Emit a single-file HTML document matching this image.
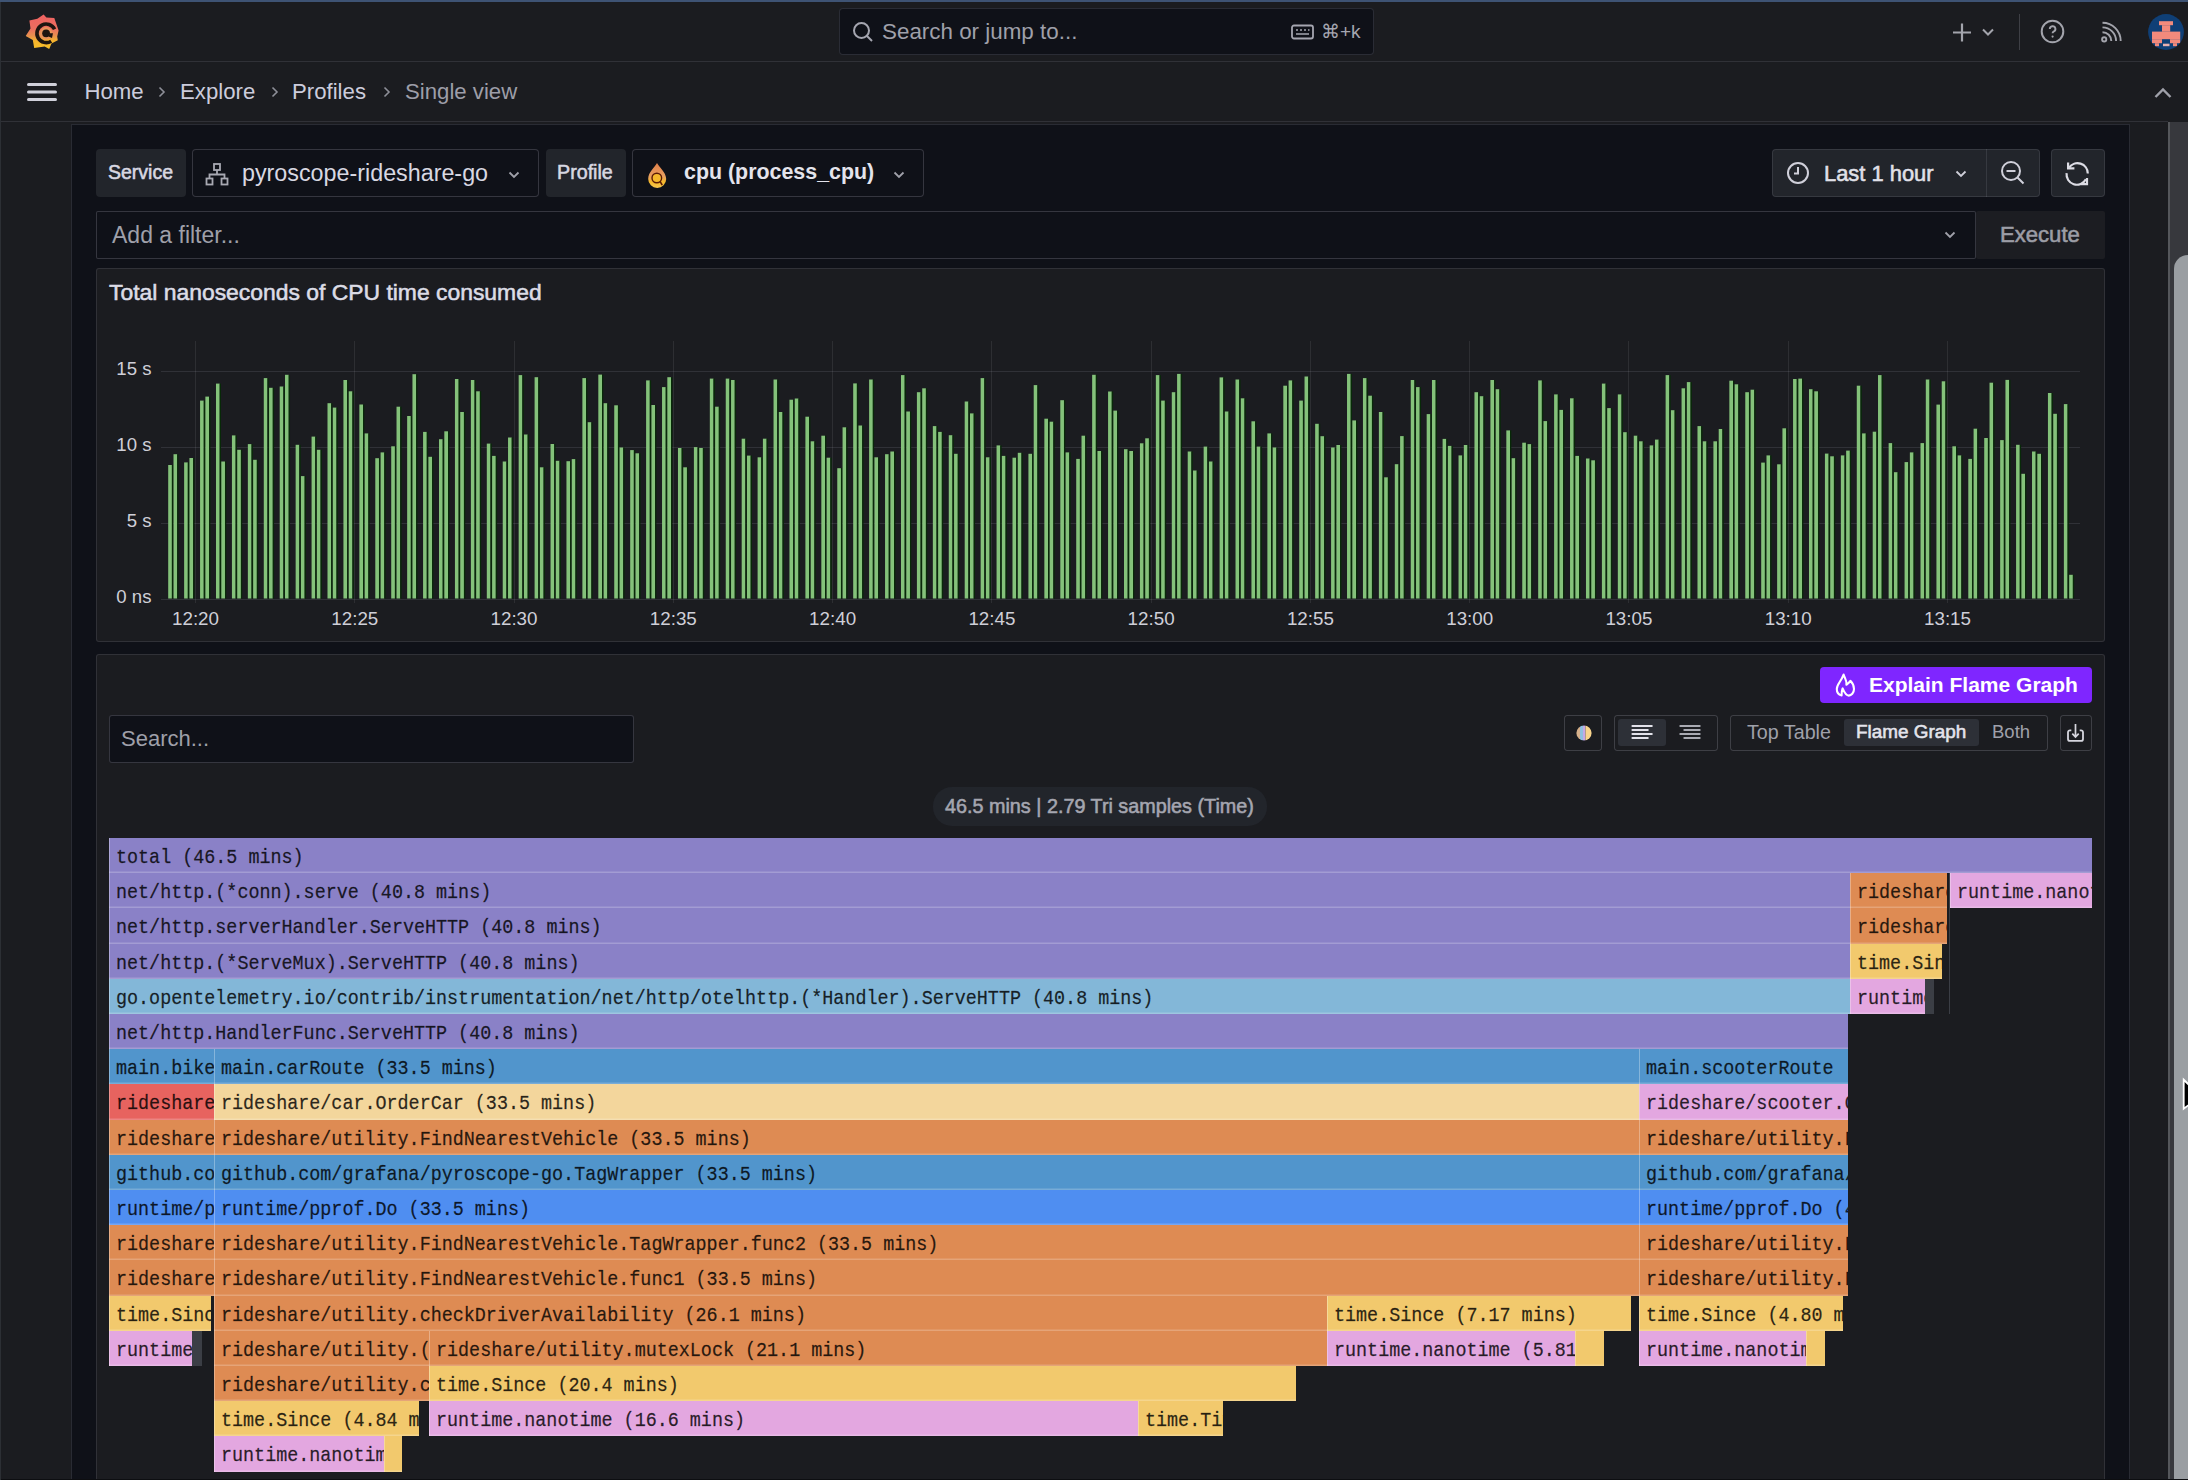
<!DOCTYPE html>
<html><head><meta charset='utf-8'><style>
*{box-sizing:border-box;margin:0;padding:0}
html,body{width:2188px;height:1480px;overflow:hidden;background:#1b1c20;font-family:"Liberation Sans",sans-serif;color:#ccccdc}
.a{position:absolute}
.t{position:absolute;white-space:nowrap;line-height:1}
.ft{display:inline-block;transform:scaleY(1.09);transform-origin:0 24px}
.fb{position:absolute;overflow:hidden;white-space:nowrap;font-family:"Liberation Mono",monospace;font-size:18.4px;color:rgba(0,0,0,0.82);-webkit-text-stroke:0.35px rgba(0,0,0,0.5);line-height:34px;padding-left:7px;padding-top:4px;box-shadow:inset 1px 0 0 rgba(255,255,255,0.3),inset 0 -1.4px 0 rgba(255,255,255,0.22)}
</style></head><body>
<div class='a' style='left:0;top:0;width:2188px;height:2px;background:#3e5374'></div>
<div class='a' style='left:0;top:61px;width:2188px;height:1px;background:rgba(204,204,220,0.12)'></div>
<div class='a' style='left:0;top:121px;width:2168px;height:1px;background:rgba(204,204,220,0.12)'></div>
<svg class='a' style='left:22px;top:11px' width='42' height='42' viewBox='0 0 42 42'>
<defs><linearGradient id='lg' x1='0' y1='0' x2='0' y2='1'><stop offset='0' stop-color='#f06262'/><stop offset='0.42' stop-color='#ec6f5f'/><stop offset='0.62' stop-color='#e8914e'/><stop offset='0.78' stop-color='#f6b52c'/><stop offset='1' stop-color='#f8c02a'/></linearGradient></defs>
<path fill='url(#lg)' d='M21.6 3.4 L24.4 6.5 L32.3 7.1 L34 11.9 L36.6 19.6 L35.2 25.5 L35.8 29.2 L29.5 32.6 L27.2 38 L22.7 35.5 L12.2 36.9 L10.8 28.9 L3.7 25 L8.5 17.6 L7.4 9.4 L15.3 7.7 Z'/>
<path d='M32.6 18.3 A9.3 9.3 0 1 0 29.2 30.2' fill='none' stroke='#1e1510' stroke-width='3.6'/>
<circle cx='24.1' cy='22.3' r='6.2' fill='#e8925a'/>
<circle cx='24.1' cy='22.3' r='3.9' fill='#1e1510'/>
<path d='M28 22.3 L31 22.3 L30 27 L26.5 25.6 Z' fill='#1e1510'/>
</svg>
<div class='a' style='left:839px;top:8px;width:535px;height:47px;background:#0f1118;border:1px solid rgba(204,204,220,0.15);border-radius:4px'></div>
<svg class='a' style='left:852px;top:21px' width='22' height='22' viewBox='0 0 22 22'><circle cx='9.5' cy='9.5' r='7.5' fill='none' stroke='#a5a6b0' stroke-width='2'/><path d='M15 15 L20 20' stroke='#a5a6b0' stroke-width='2'/></svg>
<div class='t' style='left:882px;top:21px;font-size:22.4px;color:#9fa0aa'>Search or jump to...</div>
<svg class='a' style='left:1291px;top:24px' width='23' height='16' viewBox='0 0 23 16'><rect x='1' y='1.5' width='21' height='13' rx='2' fill='none' stroke='#a5a6b0' stroke-width='1.8'/><path d='M5 6h2M9 6h2M13 6h2M17 6h1.5M5 10h13' stroke='#a5a6b0' stroke-width='1.6'/></svg>
<div class='t' style='left:1321px;top:22px;font-size:19px;color:#a5a6b0'>⌘+k</div>
<svg class='a' style='left:1951px;top:21px' width='22' height='22' viewBox='0 0 22 22'><path d='M11 2.5v18M2 11.5h18' stroke='#a3a4ac' stroke-width='2.2'/></svg>
<svg class='a' style='left:1981px;top:27px' width='14' height='10' viewBox='0 0 14 10'><path d='M2 2.5l5 5 5-5' fill='none' stroke='#a3a4ac' stroke-width='2'/></svg>
<div class='a' style='left:2019px;top:14px;width:1px;height:36px;background:rgba(204,204,220,0.2)'></div>
<svg class='a' style='left:2039px;top:18px' width='27' height='27' viewBox='0 0 27 27'><circle cx='13.5' cy='13.5' r='10.8' fill='none' stroke='#a3a4ac' stroke-width='2'/><path d='M10.8 11a2.8 2.8 0 1 1 3.8 2.6c-0.8 0.4-1 0.9-1 1.7' fill='none' stroke='#a3a4ac' stroke-width='1.9'/><circle cx='13.6' cy='18.6' r='1.1' fill='#a3a4ac'/></svg>
<svg class='a' style='left:2099px;top:21px' width='24' height='24' viewBox='0 0 24 24'><circle cx='5.2' cy='18.4' r='2.1' fill='none' stroke='#a3a4ac' stroke-width='1.9'/><path d='M3.5 11.2a8.8 8.8 0 0 1 8.8 8.8M3.5 6.4a13.6 13.6 0 0 1 13.6 13.6M3.5 1.8a18.2 18.2 0 0 1 18.2 18.2' fill='none' stroke='#a3a4ac' stroke-width='1.9'/></svg>
<svg class='a' style='left:2148px;top:13.8px' width='36' height='36' viewBox='2148 13.8 36 36'><clipPath id='av'><circle cx='2166' cy='31.8' r='17.9'/></clipPath><g clip-path='url(#av)'><rect x='2148' y='13.8' width='36' height='36' fill='#0f3f76'/>
<g fill='#f28a7c'><rect x='2159' y='21' width='14' height='4'/><rect x='2162' y='25' width='8.2' height='6.5'/><rect x='2152' y='31.4' width='28.2' height='7.6'/><rect x='2152' y='39' width='10' height='4'/><rect x='2155' y='43' width='4' height='3'/><rect x='2170' y='39' width='10.2' height='4'/><rect x='2173' y='43' width='4' height='3'/><rect x='2163' y='43.5' width='6.5' height='2.5' fill='#e8b0b0'/></g></g></svg>
<svg class='a' style='left:2153px;top:86px' width='20' height='14' viewBox='0 0 20 14'><path d='M2.5 11l7.5-7.5 7.5 7.5' fill='none' stroke='#a0a1aa' stroke-width='2.4'/></svg>
<svg class='a' style='left:27px;top:82px' width='30' height='20' viewBox='0 0 30 20'><path d='M1.5 2.5h27M1.5 10h27M1.5 17.5h27' stroke='#d0d0da' stroke-width='3' stroke-linecap='round'/></svg>
<div class='t' style='left:84.5px;top:81px;font-size:22.2px;color:#ccccdc'>Home</div>
<div class='t' style='left:180px;top:81px;font-size:22.2px;color:#ccccdc'>Explore</div>
<div class='t' style='left:292px;top:81px;font-size:22.2px;color:#ccccdc'>Profiles</div>
<div class='t' style='left:405px;top:81px;font-size:22.2px;color:#9d9ea8'>Single view</div>
<svg class='a' style='left:157px;top:85px' width='10' height='14' viewBox='0 0 10 14'><path d='M2.5 2.5l4.5 4.5-4.5 4.5' fill='none' stroke='#8e8f98' stroke-width='1.6'/></svg>
<svg class='a' style='left:270px;top:85px' width='10' height='14' viewBox='0 0 10 14'><path d='M2.5 2.5l4.5 4.5-4.5 4.5' fill='none' stroke='#8e8f98' stroke-width='1.6'/></svg>
<svg class='a' style='left:382px;top:85px' width='10' height='14' viewBox='0 0 10 14'><path d='M2.5 2.5l4.5 4.5-4.5 4.5' fill='none' stroke='#8e8f98' stroke-width='1.6'/></svg>
<div class='a' style='left:71px;top:124px;width:2059px;height:1400px;background:#0f1118;border:1px solid rgba(204,204,220,0.14)'></div>
<div class='a' style='left:2168px;top:122px;width:20px;height:1358px;background:#37383d;border-left:2px solid #55575b'></div>
<div class='a' style='left:2174px;top:255px;width:28px;height:1260px;background:#9a9ea2;border-radius:14px'></div>
<div class='a' style='left:96px;top:149px;width:90px;height:48px;background:#22252b;border-radius:4px'></div>
<div class='t' style='left:108px;top:163.2px;-webkit-text-stroke:0.55px currentColor;font-size:19.5px;color:#d8d8e2'>Service</div>
<div class='a' style='left:192px;top:149px;width:347px;height:48px;background:#0f1118;border:1px solid rgba(204,204,220,0.2);border-radius:4px'></div>
<svg class='a' style='left:205px;top:163px' width='24' height='24' viewBox='0 0 24 24'><rect x='9' y='1' width='6' height='6' fill='none' stroke='#a8a9b2' stroke-width='1.8'/><rect x='1.5' y='15.5' width='6' height='6' fill='none' stroke='#a8a9b2' stroke-width='1.8'/><rect x='16.5' y='15.5' width='6' height='6' fill='none' stroke='#a8a9b2' stroke-width='1.8'/><path d='M12 7v4.5M4.5 15.5v-4h15v4' fill='none' stroke='#a8a9b2' stroke-width='1.8'/></svg>
<div class='t' style='left:242px;top:162px;font-size:23.3px;color:#d8d8e2'>pyroscope-rideshare-go</div>
<svg class='a' style='left:508px;top:171px' width='12' height='8' viewBox='0 0 12 8'><path d='M1.5 1.5l4.5 4.5 4.5-4.5' fill='none' stroke='#a0a1aa' stroke-width='1.8'/></svg>
<div class='a' style='left:546px;top:149px;width:80px;height:48px;background:#22252b;border-radius:4px'></div>
<div class='t' style='left:557px;top:163.2px;-webkit-text-stroke:0.55px currentColor;font-size:19.7px;color:#d8d8e2'>Profile</div>
<div class='a' style='left:632px;top:149px;width:292px;height:48px;background:#0f1118;border:1px solid rgba(204,204,220,0.2);border-radius:4px'></div>
<svg class='a' style='left:646px;top:161px' width='22' height='28' viewBox='0 0 22 28'><defs><linearGradient id='fl' x1='0' y1='0' x2='0' y2='1'><stop offset='0' stop-color='#e07f4a'/><stop offset='0.55' stop-color='#e8a060'/><stop offset='0.75' stop-color='#f5b82a'/><stop offset='1' stop-color='#f8c850'/></linearGradient></defs><path d='M11 2C13 6 20 11 20.2 18A9 9 0 0 1 2.2 18C2.2 11 9 6 11 2Z' fill='url(#fl)'/><circle cx='10.8' cy='17' r='4.8' fill='#f5b82a' stroke='#5a1a05' stroke-width='1.4'/><path d='M14.2 20.6L16.2 24.2' stroke='#5a1a05' stroke-width='1.6'/></svg>
<div class='t' style='left:684px;top:162px;font-size:21.4px;font-weight:700;color:#e4e4ec'>cpu (process_cpu)</div>
<svg class='a' style='left:893px;top:171px' width='12' height='8' viewBox='0 0 12 8'><path d='M1.5 1.5l4.5 4.5 4.5-4.5' fill='none' stroke='#a0a1aa' stroke-width='1.8'/></svg>
<div class='a' style='left:1772px;top:149px;width:268px;height:48px;background:#22252b;border:1px solid rgba(204,204,220,0.12);border-radius:4px'></div>
<div class='a' style='left:1986px;top:149px;width:1px;height:48px;background:rgba(204,204,220,0.12)'></div>
<svg class='a' style='left:1786px;top:161px' width='24' height='24' viewBox='0 0 24 24'><circle cx='12' cy='12' r='10' fill='none' stroke='#d0d0da' stroke-width='2'/><path d='M12 6v6.5H8' fill='none' stroke='#d0d0da' stroke-width='2'/></svg>
<div class='t' style='left:1824px;top:163px;-webkit-text-stroke:0.55px currentColor;font-size:21.9px;color:#e0e0e8'>Last 1 hour</div>
<svg class='a' style='left:1955px;top:170px' width='12' height='8' viewBox='0 0 12 8'><path d='M1.5 1.5l4.5 4.5 4.5-4.5' fill='none' stroke='#d0d0da' stroke-width='1.8'/></svg>
<svg class='a' style='left:2000px;top:160px' width='26' height='26' viewBox='0 0 26 26'><circle cx='11' cy='11' r='9' fill='none' stroke='#d0d0da' stroke-width='2'/><path d='M6.5 11h9M17.5 17.5l6 6' fill='none' stroke='#d0d0da' stroke-width='2'/></svg>
<div class='a' style='left:2051px;top:149px;width:54px;height:48px;background:#22252b;border:1px solid rgba(204,204,220,0.12);border-radius:4px'></div>
<svg class='a' style='left:2064px;top:160px' width='28' height='28' viewBox='0 0 28 28'><path d='M5.1 7.5A10.3 10.3 0 0 1 23.8 13.4M2.6 13.2A10.3 10.3 0 0 0 21.9 19.3' fill='none' stroke='#dcdce4' stroke-width='2.2'/><path d='M4.1 2.4V8.3H10.4M23 18V24.2H16.7' fill='none' stroke='#dcdce4' stroke-width='2.2'/></svg>
<div class='a' style='left:96px;top:211px;width:1880px;height:48px;background:#0f1118;border:1px solid rgba(204,204,220,0.2);border-radius:2px'></div>
<div class='t' style='left:112px;top:224px;font-size:23px;color:#9fa0aa'>Add a filter...</div>
<svg class='a' style='left:1944px;top:231px' width='12' height='8' viewBox='0 0 12 8'><path d='M1.5 1.5l4.5 4.5 4.5-4.5' fill='none' stroke='#a0a1aa' stroke-width='1.8'/></svg>
<div class='a' style='left:1976px;top:211px;width:129px;height:48px;background:#1c1d22;border-radius:2px'></div>
<div class='t' style='left:2000px;top:224px;-webkit-text-stroke:0.55px currentColor;font-size:22.1px;color:#9c9da6'>Execute</div>
<div class='a' style='left:96px;top:268px;width:2009px;height:374px;background:#1b1c20;border:1px solid rgba(204,204,220,0.12);border-radius:3px'></div>
<div class='t' style='left:109px;top:280.6px;-webkit-text-stroke:0.55px currentColor;font-size:22.9px;color:#dcdce6'>Total nanoseconds of CPU time consumed</div>
<div class='a' style='left:161px;top:370.8px;width:1919px;height:1px;background:rgba(204,204,220,0.12)'></div>
<div class='t' style='left:60px;width:91.5px;text-align:right;top:360.3px;font-size:18.6px;color:#cfcfd8'>15 s</div>
<div class='a' style='left:161px;top:446.7px;width:1919px;height:1px;background:rgba(204,204,220,0.12)'></div>
<div class='t' style='left:60px;width:91.5px;text-align:right;top:436.2px;font-size:18.6px;color:#cfcfd8'>10 s</div>
<div class='a' style='left:161px;top:522.6px;width:1919px;height:1px;background:rgba(204,204,220,0.12)'></div>
<div class='t' style='left:60px;width:91.5px;text-align:right;top:512.1px;font-size:18.6px;color:#cfcfd8'>5 s</div>
<div class='a' style='left:161px;top:598.5px;width:1919px;height:1px;background:rgba(204,204,220,0.12)'></div>
<div class='t' style='left:60px;width:91.5px;text-align:right;top:588.0px;font-size:18.6px;color:#cfcfd8'>0 ns</div>
<div class='a' style='left:195.0px;top:341px;width:1px;height:262px;background:rgba(204,204,220,0.10)'></div>
<div class='t' style='left:155.5px;width:80px;text-align:center;top:609.5px;font-size:18.8px;color:#cfcfd8'>12:20</div>
<div class='a' style='left:354.3px;top:341px;width:1px;height:262px;background:rgba(204,204,220,0.10)'></div>
<div class='t' style='left:314.8px;width:80px;text-align:center;top:609.5px;font-size:18.8px;color:#cfcfd8'>12:25</div>
<div class='a' style='left:513.5px;top:341px;width:1px;height:262px;background:rgba(204,204,220,0.10)'></div>
<div class='t' style='left:474.0px;width:80px;text-align:center;top:609.5px;font-size:18.8px;color:#cfcfd8'>12:30</div>
<div class='a' style='left:672.8px;top:341px;width:1px;height:262px;background:rgba(204,204,220,0.10)'></div>
<div class='t' style='left:633.3px;width:80px;text-align:center;top:609.5px;font-size:18.8px;color:#cfcfd8'>12:35</div>
<div class='a' style='left:832.1px;top:341px;width:1px;height:262px;background:rgba(204,204,220,0.10)'></div>
<div class='t' style='left:792.6px;width:80px;text-align:center;top:609.5px;font-size:18.8px;color:#cfcfd8'>12:40</div>
<div class='a' style='left:991.4px;top:341px;width:1px;height:262px;background:rgba(204,204,220,0.10)'></div>
<div class='t' style='left:951.9px;width:80px;text-align:center;top:609.5px;font-size:18.8px;color:#cfcfd8'>12:45</div>
<div class='a' style='left:1150.6px;top:341px;width:1px;height:262px;background:rgba(204,204,220,0.10)'></div>
<div class='t' style='left:1111.1px;width:80px;text-align:center;top:609.5px;font-size:18.8px;color:#cfcfd8'>12:50</div>
<div class='a' style='left:1309.9px;top:341px;width:1px;height:262px;background:rgba(204,204,220,0.10)'></div>
<div class='t' style='left:1270.4px;width:80px;text-align:center;top:609.5px;font-size:18.8px;color:#cfcfd8'>12:55</div>
<div class='a' style='left:1469.2px;top:341px;width:1px;height:262px;background:rgba(204,204,220,0.10)'></div>
<div class='t' style='left:1429.7px;width:80px;text-align:center;top:609.5px;font-size:18.8px;color:#cfcfd8'>13:00</div>
<div class='a' style='left:1628.4px;top:341px;width:1px;height:262px;background:rgba(204,204,220,0.10)'></div>
<div class='t' style='left:1588.9px;width:80px;text-align:center;top:609.5px;font-size:18.8px;color:#cfcfd8'>13:05</div>
<div class='a' style='left:1787.7px;top:341px;width:1px;height:262px;background:rgba(204,204,220,0.10)'></div>
<div class='t' style='left:1748.2px;width:80px;text-align:center;top:609.5px;font-size:18.8px;color:#cfcfd8'>13:10</div>
<div class='a' style='left:1947.0px;top:341px;width:1px;height:262px;background:rgba(204,204,220,0.10)'></div>
<div class='t' style='left:1907.5px;width:80px;text-align:center;top:609.5px;font-size:18.8px;color:#cfcfd8'>13:15</div>
<svg class='a' style='left:0;top:0' width='2188' height='640'><rect x='168.20' y='465.0' width='3.7' height='133.5' fill='#84c27a'/><rect x='171.90' y='465.0' width='1.3' height='133.5' fill='#082a08'/><rect x='173.50' y='454.2' width='3.7' height='144.3' fill='#84c27a'/><rect x='177.20' y='454.2' width='1.3' height='144.3' fill='#082a08'/><rect x='184.13' y='462.4' width='3.7' height='136.1' fill='#84c27a'/><rect x='187.83' y='462.4' width='1.3' height='136.1' fill='#082a08'/><rect x='189.43' y='458.0' width='3.7' height='140.5' fill='#84c27a'/><rect x='193.13' y='458.0' width='1.3' height='140.5' fill='#082a08'/><rect x='200.06' y='400.6' width='3.7' height='197.9' fill='#84c27a'/><rect x='203.76' y='400.6' width='1.3' height='197.9' fill='#082a08'/><rect x='205.36' y='396.6' width='3.7' height='201.9' fill='#84c27a'/><rect x='209.06' y='396.6' width='1.3' height='201.9' fill='#082a08'/><rect x='215.99' y='383.6' width='3.7' height='214.9' fill='#84c27a'/><rect x='219.69' y='383.6' width='1.3' height='214.9' fill='#082a08'/><rect x='221.29' y='461.5' width='3.7' height='137.0' fill='#84c27a'/><rect x='224.99' y='461.5' width='1.3' height='137.0' fill='#082a08'/><rect x='231.92' y='435.4' width='3.7' height='163.1' fill='#84c27a'/><rect x='235.62' y='435.4' width='1.3' height='163.1' fill='#082a08'/><rect x='237.22' y='449.8' width='3.7' height='148.7' fill='#84c27a'/><rect x='240.92' y='449.8' width='1.3' height='148.7' fill='#082a08'/><rect x='247.85' y='444.1' width='3.7' height='154.4' fill='#84c27a'/><rect x='251.55' y='444.1' width='1.3' height='154.4' fill='#082a08'/><rect x='253.15' y='459.8' width='3.7' height='138.7' fill='#84c27a'/><rect x='256.85' y='459.8' width='1.3' height='138.7' fill='#082a08'/><rect x='263.78' y='378.1' width='3.7' height='220.4' fill='#84c27a'/><rect x='267.48' y='378.1' width='1.3' height='220.4' fill='#082a08'/><rect x='269.08' y='387.8' width='3.7' height='210.7' fill='#84c27a'/><rect x='272.78' y='387.8' width='1.3' height='210.7' fill='#082a08'/><rect x='279.71' y='386.5' width='3.7' height='212.0' fill='#84c27a'/><rect x='283.41' y='386.5' width='1.3' height='212.0' fill='#082a08'/><rect x='285.01' y='374.8' width='3.7' height='223.7' fill='#84c27a'/><rect x='288.71' y='374.8' width='1.3' height='223.7' fill='#082a08'/><rect x='295.64' y='444.8' width='3.7' height='153.7' fill='#84c27a'/><rect x='299.34' y='444.8' width='1.3' height='153.7' fill='#082a08'/><rect x='300.94' y='476.1' width='3.7' height='122.4' fill='#84c27a'/><rect x='304.64' y='476.1' width='1.3' height='122.4' fill='#082a08'/><rect x='311.57' y='436.6' width='3.7' height='161.9' fill='#84c27a'/><rect x='315.27' y='436.6' width='1.3' height='161.9' fill='#082a08'/><rect x='316.87' y='449.8' width='3.7' height='148.7' fill='#84c27a'/><rect x='320.57' y='449.8' width='1.3' height='148.7' fill='#082a08'/><rect x='327.50' y='403.2' width='3.7' height='195.3' fill='#84c27a'/><rect x='331.20' y='403.2' width='1.3' height='195.3' fill='#082a08'/><rect x='332.80' y='407.6' width='3.7' height='190.9' fill='#84c27a'/><rect x='336.50' y='407.6' width='1.3' height='190.9' fill='#082a08'/><rect x='343.43' y='380.0' width='3.7' height='218.5' fill='#84c27a'/><rect x='347.13' y='380.0' width='1.3' height='218.5' fill='#082a08'/><rect x='348.73' y='391.3' width='3.7' height='207.2' fill='#84c27a'/><rect x='352.43' y='391.3' width='1.3' height='207.2' fill='#082a08'/><rect x='359.36' y='404.5' width='3.7' height='194.0' fill='#84c27a'/><rect x='363.06' y='404.5' width='1.3' height='194.0' fill='#082a08'/><rect x='364.66' y='433.4' width='3.7' height='165.1' fill='#84c27a'/><rect x='368.36' y='433.4' width='1.3' height='165.1' fill='#082a08'/><rect x='375.29' y='458.2' width='3.7' height='140.3' fill='#84c27a'/><rect x='378.99' y='458.2' width='1.3' height='140.3' fill='#082a08'/><rect x='380.59' y='452.4' width='3.7' height='146.1' fill='#84c27a'/><rect x='384.29' y='452.4' width='1.3' height='146.1' fill='#082a08'/><rect x='391.22' y='446.3' width='3.7' height='152.2' fill='#84c27a'/><rect x='394.92' y='446.3' width='1.3' height='152.2' fill='#082a08'/><rect x='396.52' y='406.7' width='3.7' height='191.8' fill='#84c27a'/><rect x='400.22' y='406.7' width='1.3' height='191.8' fill='#082a08'/><rect x='407.15' y='416.0' width='3.7' height='182.5' fill='#84c27a'/><rect x='410.85' y='416.0' width='1.3' height='182.5' fill='#082a08'/><rect x='412.45' y='374.2' width='3.7' height='224.3' fill='#84c27a'/><rect x='416.15' y='374.2' width='1.3' height='224.3' fill='#082a08'/><rect x='423.08' y='431.9' width='3.7' height='166.6' fill='#84c27a'/><rect x='426.78' y='431.9' width='1.3' height='166.6' fill='#082a08'/><rect x='428.38' y='456.8' width='3.7' height='141.7' fill='#84c27a'/><rect x='432.08' y='456.8' width='1.3' height='141.7' fill='#082a08'/><rect x='439.01' y='439.2' width='3.7' height='159.3' fill='#84c27a'/><rect x='442.71' y='439.2' width='1.3' height='159.3' fill='#082a08'/><rect x='444.31' y='431.3' width='3.7' height='167.2' fill='#84c27a'/><rect x='448.01' y='431.3' width='1.3' height='167.2' fill='#082a08'/><rect x='454.94' y='379.0' width='3.7' height='219.5' fill='#84c27a'/><rect x='458.64' y='379.0' width='1.3' height='219.5' fill='#082a08'/><rect x='460.24' y='412.0' width='3.7' height='186.5' fill='#84c27a'/><rect x='463.94' y='412.0' width='1.3' height='186.5' fill='#082a08'/><rect x='470.87' y='380.0' width='3.7' height='218.5' fill='#84c27a'/><rect x='474.57' y='380.0' width='1.3' height='218.5' fill='#082a08'/><rect x='476.17' y='391.3' width='3.7' height='207.2' fill='#84c27a'/><rect x='479.87' y='391.3' width='1.3' height='207.2' fill='#082a08'/><rect x='486.80' y='443.6' width='3.7' height='154.9' fill='#84c27a'/><rect x='490.50' y='443.6' width='1.3' height='154.9' fill='#082a08'/><rect x='492.10' y='455.9' width='3.7' height='142.6' fill='#84c27a'/><rect x='495.80' y='455.9' width='1.3' height='142.6' fill='#082a08'/><rect x='502.73' y='461.5' width='3.7' height='137.0' fill='#84c27a'/><rect x='506.43' y='461.5' width='1.3' height='137.0' fill='#082a08'/><rect x='508.03' y='437.5' width='3.7' height='161.0' fill='#84c27a'/><rect x='511.73' y='437.5' width='1.3' height='161.0' fill='#082a08'/><rect x='518.66' y='375.1' width='3.7' height='223.4' fill='#84c27a'/><rect x='522.36' y='375.1' width='1.3' height='223.4' fill='#082a08'/><rect x='523.96' y='434.5' width='3.7' height='164.0' fill='#84c27a'/><rect x='527.66' y='434.5' width='1.3' height='164.0' fill='#082a08'/><rect x='534.59' y='377.2' width='3.7' height='221.3' fill='#84c27a'/><rect x='538.29' y='377.2' width='1.3' height='221.3' fill='#082a08'/><rect x='539.89' y='467.3' width='3.7' height='131.2' fill='#84c27a'/><rect x='543.59' y='467.3' width='1.3' height='131.2' fill='#082a08'/><rect x='550.52' y='444.0' width='3.7' height='154.5' fill='#84c27a'/><rect x='554.22' y='444.0' width='1.3' height='154.5' fill='#082a08'/><rect x='555.82' y='460.8' width='3.7' height='137.7' fill='#84c27a'/><rect x='559.52' y='460.8' width='1.3' height='137.7' fill='#082a08'/><rect x='566.45' y='461.2' width='3.7' height='137.3' fill='#84c27a'/><rect x='570.15' y='461.2' width='1.3' height='137.3' fill='#082a08'/><rect x='571.75' y='459.1' width='3.7' height='139.4' fill='#84c27a'/><rect x='575.45' y='459.1' width='1.3' height='139.4' fill='#082a08'/><rect x='582.38' y='378.1' width='3.7' height='220.4' fill='#84c27a'/><rect x='586.08' y='378.1' width='1.3' height='220.4' fill='#082a08'/><rect x='587.68' y='422.2' width='3.7' height='176.3' fill='#84c27a'/><rect x='591.38' y='422.2' width='1.3' height='176.3' fill='#082a08'/><rect x='598.31' y='374.6' width='3.7' height='223.9' fill='#84c27a'/><rect x='602.01' y='374.6' width='1.3' height='223.9' fill='#082a08'/><rect x='603.61' y='403.2' width='3.7' height='195.3' fill='#84c27a'/><rect x='607.31' y='403.2' width='1.3' height='195.3' fill='#082a08'/><rect x='614.24' y='405.3' width='3.7' height='193.2' fill='#84c27a'/><rect x='617.94' y='405.3' width='1.3' height='193.2' fill='#082a08'/><rect x='619.54' y='447.5' width='3.7' height='151.0' fill='#84c27a'/><rect x='623.24' y='447.5' width='1.3' height='151.0' fill='#082a08'/><rect x='630.17' y='450.1' width='3.7' height='148.4' fill='#84c27a'/><rect x='633.87' y='450.1' width='1.3' height='148.4' fill='#082a08'/><rect x='635.47' y='453.3' width='3.7' height='145.2' fill='#84c27a'/><rect x='639.17' y='453.3' width='1.3' height='145.2' fill='#082a08'/><rect x='646.10' y='380.4' width='3.7' height='218.1' fill='#84c27a'/><rect x='649.80' y='380.4' width='1.3' height='218.1' fill='#082a08'/><rect x='651.40' y='405.0' width='3.7' height='193.5' fill='#84c27a'/><rect x='655.10' y='405.0' width='1.3' height='193.5' fill='#082a08'/><rect x='662.03' y='387.1' width='3.7' height='211.4' fill='#84c27a'/><rect x='665.73' y='387.1' width='1.3' height='211.4' fill='#082a08'/><rect x='667.33' y='377.2' width='3.7' height='221.3' fill='#84c27a'/><rect x='671.03' y='377.2' width='1.3' height='221.3' fill='#082a08'/><rect x='677.96' y='448.0' width='3.7' height='150.5' fill='#84c27a'/><rect x='681.66' y='448.0' width='1.3' height='150.5' fill='#082a08'/><rect x='683.26' y='467.3' width='3.7' height='131.2' fill='#84c27a'/><rect x='686.96' y='467.3' width='1.3' height='131.2' fill='#082a08'/><rect x='693.89' y='447.1' width='3.7' height='151.4' fill='#84c27a'/><rect x='697.59' y='447.1' width='1.3' height='151.4' fill='#082a08'/><rect x='699.19' y='448.0' width='3.7' height='150.5' fill='#84c27a'/><rect x='702.89' y='448.0' width='1.3' height='150.5' fill='#082a08'/><rect x='709.82' y='378.6' width='3.7' height='219.9' fill='#84c27a'/><rect x='713.52' y='378.6' width='1.3' height='219.9' fill='#082a08'/><rect x='715.12' y='406.7' width='3.7' height='191.8' fill='#84c27a'/><rect x='718.82' y='406.7' width='1.3' height='191.8' fill='#082a08'/><rect x='725.75' y='378.6' width='3.7' height='219.9' fill='#84c27a'/><rect x='729.45' y='378.6' width='1.3' height='219.9' fill='#082a08'/><rect x='731.05' y='380.0' width='3.7' height='218.5' fill='#84c27a'/><rect x='734.75' y='380.0' width='1.3' height='218.5' fill='#082a08'/><rect x='741.68' y='438.7' width='3.7' height='159.8' fill='#84c27a'/><rect x='745.38' y='438.7' width='1.3' height='159.8' fill='#082a08'/><rect x='746.98' y='455.6' width='3.7' height='142.9' fill='#84c27a'/><rect x='750.68' y='455.6' width='1.3' height='142.9' fill='#082a08'/><rect x='757.61' y='457.3' width='3.7' height='141.2' fill='#84c27a'/><rect x='761.31' y='457.3' width='1.3' height='141.2' fill='#082a08'/><rect x='762.91' y='438.7' width='3.7' height='159.8' fill='#84c27a'/><rect x='766.61' y='438.7' width='1.3' height='159.8' fill='#082a08'/><rect x='773.54' y='379.5' width='3.7' height='219.0' fill='#84c27a'/><rect x='777.24' y='379.5' width='1.3' height='219.0' fill='#082a08'/><rect x='778.84' y='412.0' width='3.7' height='186.5' fill='#84c27a'/><rect x='782.54' y='412.0' width='1.3' height='186.5' fill='#082a08'/><rect x='789.47' y='399.7' width='3.7' height='198.8' fill='#84c27a'/><rect x='793.17' y='399.7' width='1.3' height='198.8' fill='#082a08'/><rect x='794.77' y='398.5' width='3.7' height='200.0' fill='#84c27a'/><rect x='798.47' y='398.5' width='1.3' height='200.0' fill='#082a08'/><rect x='805.40' y='416.7' width='3.7' height='181.8' fill='#84c27a'/><rect x='809.10' y='416.7' width='1.3' height='181.8' fill='#082a08'/><rect x='810.70' y='441.3' width='3.7' height='157.2' fill='#84c27a'/><rect x='814.40' y='441.3' width='1.3' height='157.2' fill='#082a08'/><rect x='821.33' y='435.7' width='3.7' height='162.8' fill='#84c27a'/><rect x='825.03' y='435.7' width='1.3' height='162.8' fill='#082a08'/><rect x='826.63' y='457.7' width='3.7' height='140.8' fill='#84c27a'/><rect x='830.33' y='457.7' width='1.3' height='140.8' fill='#082a08'/><rect x='837.26' y='468.2' width='3.7' height='130.3' fill='#84c27a'/><rect x='840.96' y='468.2' width='1.3' height='130.3' fill='#082a08'/><rect x='842.56' y='427.3' width='3.7' height='171.2' fill='#84c27a'/><rect x='846.26' y='427.3' width='1.3' height='171.2' fill='#082a08'/><rect x='853.19' y='383.4' width='3.7' height='215.1' fill='#84c27a'/><rect x='856.89' y='383.4' width='1.3' height='215.1' fill='#082a08'/><rect x='858.49' y='425.5' width='3.7' height='173.0' fill='#84c27a'/><rect x='862.19' y='425.5' width='1.3' height='173.0' fill='#082a08'/><rect x='869.12' y='379.5' width='3.7' height='219.0' fill='#84c27a'/><rect x='872.82' y='379.5' width='1.3' height='219.0' fill='#082a08'/><rect x='874.42' y='457.3' width='3.7' height='141.2' fill='#84c27a'/><rect x='878.12' y='457.3' width='1.3' height='141.2' fill='#082a08'/><rect x='885.05' y='454.2' width='3.7' height='144.3' fill='#84c27a'/><rect x='888.75' y='454.2' width='1.3' height='144.3' fill='#082a08'/><rect x='890.35' y='451.5' width='3.7' height='147.0' fill='#84c27a'/><rect x='894.05' y='451.5' width='1.3' height='147.0' fill='#082a08'/><rect x='900.98' y='375.1' width='3.7' height='223.4' fill='#84c27a'/><rect x='904.68' y='375.1' width='1.3' height='223.4' fill='#082a08'/><rect x='906.28' y='411.5' width='3.7' height='187.0' fill='#84c27a'/><rect x='909.98' y='411.5' width='1.3' height='187.0' fill='#082a08'/><rect x='916.91' y='392.2' width='3.7' height='206.3' fill='#84c27a'/><rect x='920.61' y='392.2' width='1.3' height='206.3' fill='#082a08'/><rect x='922.21' y='388.3' width='3.7' height='210.2' fill='#84c27a'/><rect x='925.91' y='388.3' width='1.3' height='210.2' fill='#082a08'/><rect x='932.84' y='426.1' width='3.7' height='172.4' fill='#84c27a'/><rect x='936.54' y='426.1' width='1.3' height='172.4' fill='#082a08'/><rect x='938.14' y='431.9' width='3.7' height='166.6' fill='#84c27a'/><rect x='941.84' y='431.9' width='1.3' height='166.6' fill='#082a08'/><rect x='948.77' y='435.2' width='3.7' height='163.3' fill='#84c27a'/><rect x='952.47' y='435.2' width='1.3' height='163.3' fill='#082a08'/><rect x='954.07' y='453.8' width='3.7' height='144.7' fill='#84c27a'/><rect x='957.77' y='453.8' width='1.3' height='144.7' fill='#082a08'/><rect x='964.70' y='401.5' width='3.7' height='197.0' fill='#84c27a'/><rect x='968.40' y='401.5' width='1.3' height='197.0' fill='#082a08'/><rect x='970.00' y='413.4' width='3.7' height='185.1' fill='#84c27a'/><rect x='973.70' y='413.4' width='1.3' height='185.1' fill='#082a08'/><rect x='980.63' y='378.1' width='3.7' height='220.4' fill='#84c27a'/><rect x='984.33' y='378.1' width='1.3' height='220.4' fill='#082a08'/><rect x='985.93' y='457.3' width='3.7' height='141.2' fill='#84c27a'/><rect x='989.63' y='457.3' width='1.3' height='141.2' fill='#082a08'/><rect x='996.56' y='445.4' width='3.7' height='153.1' fill='#84c27a'/><rect x='1000.26' y='445.4' width='1.3' height='153.1' fill='#082a08'/><rect x='1001.86' y='455.9' width='3.7' height='142.6' fill='#84c27a'/><rect x='1005.56' y='455.9' width='1.3' height='142.6' fill='#082a08'/><rect x='1012.49' y='457.7' width='3.7' height='140.8' fill='#84c27a'/><rect x='1016.19' y='457.7' width='1.3' height='140.8' fill='#082a08'/><rect x='1017.79' y='452.8' width='3.7' height='145.7' fill='#84c27a'/><rect x='1021.49' y='452.8' width='1.3' height='145.7' fill='#082a08'/><rect x='1028.42' y='453.8' width='3.7' height='144.7' fill='#84c27a'/><rect x='1032.12' y='453.8' width='1.3' height='144.7' fill='#082a08'/><rect x='1033.72' y='385.1' width='3.7' height='213.4' fill='#84c27a'/><rect x='1037.42' y='385.1' width='1.3' height='213.4' fill='#082a08'/><rect x='1044.35' y='418.7' width='3.7' height='179.8' fill='#84c27a'/><rect x='1048.05' y='418.7' width='1.3' height='179.8' fill='#082a08'/><rect x='1049.65' y='421.7' width='3.7' height='176.8' fill='#84c27a'/><rect x='1053.35' y='421.7' width='1.3' height='176.8' fill='#082a08'/><rect x='1060.28' y='400.2' width='3.7' height='198.3' fill='#84c27a'/><rect x='1063.98' y='400.2' width='1.3' height='198.3' fill='#082a08'/><rect x='1065.58' y='452.4' width='3.7' height='146.1' fill='#84c27a'/><rect x='1069.28' y='452.4' width='1.3' height='146.1' fill='#082a08'/><rect x='1076.21' y='458.9' width='3.7' height='139.6' fill='#84c27a'/><rect x='1079.91' y='458.9' width='1.3' height='139.6' fill='#082a08'/><rect x='1081.51' y='435.7' width='3.7' height='162.8' fill='#84c27a'/><rect x='1085.21' y='435.7' width='1.3' height='162.8' fill='#082a08'/><rect x='1092.14' y='374.8' width='3.7' height='223.7' fill='#84c27a'/><rect x='1095.84' y='374.8' width='1.3' height='223.7' fill='#082a08'/><rect x='1097.44' y='451.0' width='3.7' height='147.5' fill='#84c27a'/><rect x='1101.14' y='451.0' width='1.3' height='147.5' fill='#082a08'/><rect x='1108.07' y='391.5' width='3.7' height='207.0' fill='#84c27a'/><rect x='1111.77' y='391.5' width='1.3' height='207.0' fill='#082a08'/><rect x='1113.37' y='410.6' width='3.7' height='187.9' fill='#84c27a'/><rect x='1117.07' y='410.6' width='1.3' height='187.9' fill='#082a08'/><rect x='1124.00' y='449.2' width='3.7' height='149.3' fill='#84c27a'/><rect x='1127.70' y='449.2' width='1.3' height='149.3' fill='#082a08'/><rect x='1129.30' y='451.0' width='3.7' height='147.5' fill='#84c27a'/><rect x='1133.00' y='451.0' width='1.3' height='147.5' fill='#082a08'/><rect x='1139.93' y='443.3' width='3.7' height='155.2' fill='#84c27a'/><rect x='1143.63' y='443.3' width='1.3' height='155.2' fill='#082a08'/><rect x='1145.23' y='438.3' width='3.7' height='160.2' fill='#84c27a'/><rect x='1148.93' y='438.3' width='1.3' height='160.2' fill='#082a08'/><rect x='1155.86' y='375.1' width='3.7' height='223.4' fill='#84c27a'/><rect x='1159.56' y='375.1' width='1.3' height='223.4' fill='#082a08'/><rect x='1161.16' y='400.6' width='3.7' height='197.9' fill='#84c27a'/><rect x='1164.86' y='400.6' width='1.3' height='197.9' fill='#082a08'/><rect x='1171.79' y='392.2' width='3.7' height='206.3' fill='#84c27a'/><rect x='1175.49' y='392.2' width='1.3' height='206.3' fill='#082a08'/><rect x='1177.09' y='373.9' width='3.7' height='224.6' fill='#84c27a'/><rect x='1180.79' y='373.9' width='1.3' height='224.6' fill='#082a08'/><rect x='1187.72' y='451.5' width='3.7' height='147.0' fill='#84c27a'/><rect x='1191.42' y='451.5' width='1.3' height='147.0' fill='#082a08'/><rect x='1193.02' y='470.5' width='3.7' height='128.0' fill='#84c27a'/><rect x='1196.72' y='470.5' width='1.3' height='128.0' fill='#082a08'/><rect x='1203.65' y='446.6' width='3.7' height='151.9' fill='#84c27a'/><rect x='1207.35' y='446.6' width='1.3' height='151.9' fill='#082a08'/><rect x='1208.95' y='461.5' width='3.7' height='137.0' fill='#84c27a'/><rect x='1212.65' y='461.5' width='1.3' height='137.0' fill='#082a08'/><rect x='1219.58' y='377.4' width='3.7' height='221.1' fill='#84c27a'/><rect x='1223.28' y='377.4' width='1.3' height='221.1' fill='#082a08'/><rect x='1224.88' y='411.5' width='3.7' height='187.0' fill='#84c27a'/><rect x='1228.58' y='411.5' width='1.3' height='187.0' fill='#082a08'/><rect x='1235.51' y='379.5' width='3.7' height='219.0' fill='#84c27a'/><rect x='1239.21' y='379.5' width='1.3' height='219.0' fill='#082a08'/><rect x='1240.81' y='398.3' width='3.7' height='200.2' fill='#84c27a'/><rect x='1244.51' y='398.3' width='1.3' height='200.2' fill='#082a08'/><rect x='1251.44' y='421.3' width='3.7' height='177.2' fill='#84c27a'/><rect x='1255.14' y='421.3' width='1.3' height='177.2' fill='#082a08'/><rect x='1256.74' y='446.6' width='3.7' height='151.9' fill='#84c27a'/><rect x='1260.44' y='446.6' width='1.3' height='151.9' fill='#082a08'/><rect x='1267.37' y='433.4' width='3.7' height='165.1' fill='#84c27a'/><rect x='1271.07' y='433.4' width='1.3' height='165.1' fill='#082a08'/><rect x='1272.67' y='447.5' width='3.7' height='151.0' fill='#84c27a'/><rect x='1276.37' y='447.5' width='1.3' height='151.0' fill='#082a08'/><rect x='1283.30' y='385.7' width='3.7' height='212.8' fill='#84c27a'/><rect x='1287.00' y='385.7' width='1.3' height='212.8' fill='#082a08'/><rect x='1288.60' y='380.4' width='3.7' height='218.1' fill='#84c27a'/><rect x='1292.30' y='380.4' width='1.3' height='218.1' fill='#082a08'/><rect x='1299.23' y='400.6' width='3.7' height='197.9' fill='#84c27a'/><rect x='1302.93' y='400.6' width='1.3' height='197.9' fill='#082a08'/><rect x='1304.53' y='376.5' width='3.7' height='222.0' fill='#84c27a'/><rect x='1308.23' y='376.5' width='1.3' height='222.0' fill='#082a08'/><rect x='1315.16' y='423.8' width='3.7' height='174.7' fill='#84c27a'/><rect x='1318.86' y='423.8' width='1.3' height='174.7' fill='#082a08'/><rect x='1320.46' y='436.2' width='3.7' height='162.3' fill='#84c27a'/><rect x='1324.16' y='436.2' width='1.3' height='162.3' fill='#082a08'/><rect x='1331.09' y='447.5' width='3.7' height='151.0' fill='#84c27a'/><rect x='1334.79' y='447.5' width='1.3' height='151.0' fill='#082a08'/><rect x='1336.39' y='445.0' width='3.7' height='153.5' fill='#84c27a'/><rect x='1340.09' y='445.0' width='1.3' height='153.5' fill='#082a08'/><rect x='1347.02' y='373.9' width='3.7' height='224.6' fill='#84c27a'/><rect x='1350.72' y='373.9' width='1.3' height='224.6' fill='#082a08'/><rect x='1352.32' y='420.4' width='3.7' height='178.1' fill='#84c27a'/><rect x='1356.02' y='420.4' width='1.3' height='178.1' fill='#082a08'/><rect x='1362.95' y='378.1' width='3.7' height='220.4' fill='#84c27a'/><rect x='1366.65' y='378.1' width='1.3' height='220.4' fill='#082a08'/><rect x='1368.25' y='395.7' width='3.7' height='202.8' fill='#84c27a'/><rect x='1371.95' y='395.7' width='1.3' height='202.8' fill='#082a08'/><rect x='1378.88' y='412.0' width='3.7' height='186.5' fill='#84c27a'/><rect x='1382.58' y='412.0' width='1.3' height='186.5' fill='#082a08'/><rect x='1384.18' y='477.3' width='3.7' height='121.2' fill='#84c27a'/><rect x='1387.88' y='477.3' width='1.3' height='121.2' fill='#082a08'/><rect x='1394.81' y='464.2' width='3.7' height='134.3' fill='#84c27a'/><rect x='1398.51' y='464.2' width='1.3' height='134.3' fill='#082a08'/><rect x='1400.11' y='436.1' width='3.7' height='162.4' fill='#84c27a'/><rect x='1403.81' y='436.1' width='1.3' height='162.4' fill='#082a08'/><rect x='1410.74' y='380.0' width='3.7' height='218.5' fill='#84c27a'/><rect x='1414.44' y='380.0' width='1.3' height='218.5' fill='#082a08'/><rect x='1416.04' y='387.1' width='3.7' height='211.4' fill='#84c27a'/><rect x='1419.74' y='387.1' width='1.3' height='211.4' fill='#082a08'/><rect x='1426.67' y='414.1' width='3.7' height='184.4' fill='#84c27a'/><rect x='1430.37' y='414.1' width='1.3' height='184.4' fill='#082a08'/><rect x='1431.97' y='380.0' width='3.7' height='218.5' fill='#84c27a'/><rect x='1435.67' y='380.0' width='1.3' height='218.5' fill='#082a08'/><rect x='1442.60' y='438.9' width='3.7' height='159.6' fill='#84c27a'/><rect x='1446.30' y='438.9' width='1.3' height='159.6' fill='#082a08'/><rect x='1447.90' y='445.9' width='3.7' height='152.6' fill='#84c27a'/><rect x='1451.60' y='445.9' width='1.3' height='152.6' fill='#082a08'/><rect x='1458.53' y='455.4' width='3.7' height='143.1' fill='#84c27a'/><rect x='1462.23' y='455.4' width='1.3' height='143.1' fill='#082a08'/><rect x='1463.83' y='445.0' width='3.7' height='153.5' fill='#84c27a'/><rect x='1467.53' y='445.0' width='1.3' height='153.5' fill='#082a08'/><rect x='1474.46' y='392.2' width='3.7' height='206.3' fill='#84c27a'/><rect x='1478.16' y='392.2' width='1.3' height='206.3' fill='#082a08'/><rect x='1479.76' y='396.2' width='3.7' height='202.3' fill='#84c27a'/><rect x='1483.46' y='396.2' width='1.3' height='202.3' fill='#082a08'/><rect x='1490.39' y='380.0' width='3.7' height='218.5' fill='#84c27a'/><rect x='1494.09' y='380.0' width='1.3' height='218.5' fill='#082a08'/><rect x='1495.69' y='389.2' width='3.7' height='209.3' fill='#84c27a'/><rect x='1499.39' y='389.2' width='1.3' height='209.3' fill='#082a08'/><rect x='1506.32' y='430.4' width='3.7' height='168.1' fill='#84c27a'/><rect x='1510.02' y='430.4' width='1.3' height='168.1' fill='#082a08'/><rect x='1511.62' y='458.2' width='3.7' height='140.3' fill='#84c27a'/><rect x='1515.32' y='458.2' width='1.3' height='140.3' fill='#082a08'/><rect x='1522.25' y='442.7' width='3.7' height='155.8' fill='#84c27a'/><rect x='1525.95' y='442.7' width='1.3' height='155.8' fill='#082a08'/><rect x='1527.55' y='444.1' width='3.7' height='154.4' fill='#84c27a'/><rect x='1531.25' y='444.1' width='1.3' height='154.4' fill='#082a08'/><rect x='1538.18' y='380.4' width='3.7' height='218.1' fill='#84c27a'/><rect x='1541.88' y='380.4' width='1.3' height='218.1' fill='#082a08'/><rect x='1543.48' y='421.1' width='3.7' height='177.4' fill='#84c27a'/><rect x='1547.18' y='421.1' width='1.3' height='177.4' fill='#082a08'/><rect x='1554.11' y='394.4' width='3.7' height='204.1' fill='#84c27a'/><rect x='1557.81' y='394.4' width='1.3' height='204.1' fill='#082a08'/><rect x='1559.41' y='409.9' width='3.7' height='188.6' fill='#84c27a'/><rect x='1563.11' y='409.9' width='1.3' height='188.6' fill='#082a08'/><rect x='1570.04' y='398.3' width='3.7' height='200.2' fill='#84c27a'/><rect x='1573.74' y='398.3' width='1.3' height='200.2' fill='#082a08'/><rect x='1575.34' y='455.9' width='3.7' height='142.6' fill='#84c27a'/><rect x='1579.04' y='455.9' width='1.3' height='142.6' fill='#082a08'/><rect x='1585.97' y='458.5' width='3.7' height='140.0' fill='#84c27a'/><rect x='1589.67' y='458.5' width='1.3' height='140.0' fill='#082a08'/><rect x='1591.27' y='460.3' width='3.7' height='138.2' fill='#84c27a'/><rect x='1594.97' y='460.3' width='1.3' height='138.2' fill='#082a08'/><rect x='1601.90' y='383.6' width='3.7' height='214.9' fill='#84c27a'/><rect x='1605.60' y='383.6' width='1.3' height='214.9' fill='#082a08'/><rect x='1607.20' y='408.1' width='3.7' height='190.4' fill='#84c27a'/><rect x='1610.90' y='408.1' width='1.3' height='190.4' fill='#082a08'/><rect x='1617.83' y='394.4' width='3.7' height='204.1' fill='#84c27a'/><rect x='1621.53' y='394.4' width='1.3' height='204.1' fill='#082a08'/><rect x='1623.13' y='432.2' width='3.7' height='166.3' fill='#84c27a'/><rect x='1626.83' y='432.2' width='1.3' height='166.3' fill='#082a08'/><rect x='1633.76' y='435.7' width='3.7' height='162.8' fill='#84c27a'/><rect x='1637.46' y='435.7' width='1.3' height='162.8' fill='#082a08'/><rect x='1639.06' y='441.3' width='3.7' height='157.2' fill='#84c27a'/><rect x='1642.76' y='441.3' width='1.3' height='157.2' fill='#082a08'/><rect x='1649.69' y='445.4' width='3.7' height='153.1' fill='#84c27a'/><rect x='1653.39' y='445.4' width='1.3' height='153.1' fill='#082a08'/><rect x='1654.99' y='439.6' width='3.7' height='158.9' fill='#84c27a'/><rect x='1658.69' y='439.6' width='1.3' height='158.9' fill='#082a08'/><rect x='1665.62' y='375.1' width='3.7' height='223.4' fill='#84c27a'/><rect x='1669.32' y='375.1' width='1.3' height='223.4' fill='#082a08'/><rect x='1670.92' y='410.2' width='3.7' height='188.3' fill='#84c27a'/><rect x='1674.62' y='410.2' width='1.3' height='188.3' fill='#082a08'/><rect x='1681.55' y='388.3' width='3.7' height='210.2' fill='#84c27a'/><rect x='1685.25' y='388.3' width='1.3' height='210.2' fill='#082a08'/><rect x='1686.85' y='382.1' width='3.7' height='216.4' fill='#84c27a'/><rect x='1690.55' y='382.1' width='1.3' height='216.4' fill='#082a08'/><rect x='1697.48' y='426.1' width='3.7' height='172.4' fill='#84c27a'/><rect x='1701.18' y='426.1' width='1.3' height='172.4' fill='#082a08'/><rect x='1702.78' y='441.3' width='3.7' height='157.2' fill='#84c27a'/><rect x='1706.48' y='441.3' width='1.3' height='157.2' fill='#082a08'/><rect x='1713.41' y='441.3' width='3.7' height='157.2' fill='#84c27a'/><rect x='1717.11' y='441.3' width='1.3' height='157.2' fill='#082a08'/><rect x='1718.71' y='429.0' width='3.7' height='169.5' fill='#84c27a'/><rect x='1722.41' y='429.0' width='1.3' height='169.5' fill='#082a08'/><rect x='1729.34' y='380.7' width='3.7' height='217.8' fill='#84c27a'/><rect x='1733.04' y='380.7' width='1.3' height='217.8' fill='#082a08'/><rect x='1734.64' y='384.3' width='3.7' height='214.2' fill='#84c27a'/><rect x='1738.34' y='384.3' width='1.3' height='214.2' fill='#082a08'/><rect x='1745.27' y='392.2' width='3.7' height='206.3' fill='#84c27a'/><rect x='1748.97' y='392.2' width='1.3' height='206.3' fill='#082a08'/><rect x='1750.57' y='389.7' width='3.7' height='208.8' fill='#84c27a'/><rect x='1754.27' y='389.7' width='1.3' height='208.8' fill='#082a08'/><rect x='1761.20' y='462.6' width='3.7' height='135.9' fill='#84c27a'/><rect x='1764.90' y='462.6' width='1.3' height='135.9' fill='#082a08'/><rect x='1766.50' y='455.4' width='3.7' height='143.1' fill='#84c27a'/><rect x='1770.20' y='455.4' width='1.3' height='143.1' fill='#082a08'/><rect x='1777.13' y='464.3' width='3.7' height='134.2' fill='#84c27a'/><rect x='1780.83' y='464.3' width='1.3' height='134.2' fill='#082a08'/><rect x='1782.43' y='428.3' width='3.7' height='170.2' fill='#84c27a'/><rect x='1786.13' y='428.3' width='1.3' height='170.2' fill='#082a08'/><rect x='1793.06' y='379.0' width='3.7' height='219.5' fill='#84c27a'/><rect x='1796.76' y='379.0' width='1.3' height='219.5' fill='#082a08'/><rect x='1798.36' y='378.6' width='3.7' height='219.9' fill='#84c27a'/><rect x='1802.06' y='378.6' width='1.3' height='219.9' fill='#082a08'/><rect x='1808.99' y='389.2' width='3.7' height='209.3' fill='#84c27a'/><rect x='1812.69' y='389.2' width='1.3' height='209.3' fill='#082a08'/><rect x='1814.29' y='391.3' width='3.7' height='207.2' fill='#84c27a'/><rect x='1817.99' y='391.3' width='1.3' height='207.2' fill='#082a08'/><rect x='1824.92' y='453.6' width='3.7' height='144.9' fill='#84c27a'/><rect x='1828.62' y='453.6' width='1.3' height='144.9' fill='#082a08'/><rect x='1830.22' y='456.3' width='3.7' height='142.2' fill='#84c27a'/><rect x='1833.92' y='456.3' width='1.3' height='142.2' fill='#082a08'/><rect x='1840.85' y='455.4' width='3.7' height='143.1' fill='#84c27a'/><rect x='1844.55' y='455.4' width='1.3' height='143.1' fill='#082a08'/><rect x='1846.15' y='450.6' width='3.7' height='147.9' fill='#84c27a'/><rect x='1849.85' y='450.6' width='1.3' height='147.9' fill='#082a08'/><rect x='1856.78' y='385.7' width='3.7' height='212.8' fill='#84c27a'/><rect x='1860.48' y='385.7' width='1.3' height='212.8' fill='#082a08'/><rect x='1862.08' y='433.4' width='3.7' height='165.1' fill='#84c27a'/><rect x='1865.78' y='433.4' width='1.3' height='165.1' fill='#082a08'/><rect x='1872.71' y='431.7' width='3.7' height='166.8' fill='#84c27a'/><rect x='1876.41' y='431.7' width='1.3' height='166.8' fill='#082a08'/><rect x='1878.01' y='375.1' width='3.7' height='223.4' fill='#84c27a'/><rect x='1881.71' y='375.1' width='1.3' height='223.4' fill='#082a08'/><rect x='1888.64' y='443.1' width='3.7' height='155.4' fill='#84c27a'/><rect x='1892.34' y='443.1' width='1.3' height='155.4' fill='#082a08'/><rect x='1893.94' y='472.2' width='3.7' height='126.3' fill='#84c27a'/><rect x='1897.64' y='472.2' width='1.3' height='126.3' fill='#082a08'/><rect x='1904.57' y='462.1' width='3.7' height='136.4' fill='#84c27a'/><rect x='1908.27' y='462.1' width='1.3' height='136.4' fill='#082a08'/><rect x='1909.87' y='452.4' width='3.7' height='146.1' fill='#84c27a'/><rect x='1913.57' y='452.4' width='1.3' height='146.1' fill='#082a08'/><rect x='1920.50' y='443.1' width='3.7' height='155.4' fill='#84c27a'/><rect x='1924.20' y='443.1' width='1.3' height='155.4' fill='#082a08'/><rect x='1925.80' y='379.5' width='3.7' height='219.0' fill='#84c27a'/><rect x='1929.50' y='379.5' width='1.3' height='219.0' fill='#082a08'/><rect x='1936.43' y='404.6' width='3.7' height='193.9' fill='#84c27a'/><rect x='1940.13' y='404.6' width='1.3' height='193.9' fill='#082a08'/><rect x='1941.73' y='381.3' width='3.7' height='217.2' fill='#84c27a'/><rect x='1945.43' y='381.3' width='1.3' height='217.2' fill='#082a08'/><rect x='1952.36' y='446.3' width='3.7' height='152.2' fill='#84c27a'/><rect x='1956.06' y='446.3' width='1.3' height='152.2' fill='#082a08'/><rect x='1957.66' y='455.4' width='3.7' height='143.1' fill='#84c27a'/><rect x='1961.36' y='455.4' width='1.3' height='143.1' fill='#082a08'/><rect x='1968.29' y='458.9' width='3.7' height='139.6' fill='#84c27a'/><rect x='1971.99' y='458.9' width='1.3' height='139.6' fill='#082a08'/><rect x='1973.59' y='428.7' width='3.7' height='169.8' fill='#84c27a'/><rect x='1977.29' y='428.7' width='1.3' height='169.8' fill='#082a08'/><rect x='1984.22' y='438.0' width='3.7' height='160.5' fill='#84c27a'/><rect x='1987.92' y='438.0' width='1.3' height='160.5' fill='#082a08'/><rect x='1989.52' y='382.7' width='3.7' height='215.8' fill='#84c27a'/><rect x='1993.22' y='382.7' width='1.3' height='215.8' fill='#082a08'/><rect x='2000.15' y='440.1' width='3.7' height='158.4' fill='#84c27a'/><rect x='2003.85' y='440.1' width='1.3' height='158.4' fill='#082a08'/><rect x='2005.45' y='379.9' width='3.7' height='218.6' fill='#84c27a'/><rect x='2009.15' y='379.9' width='1.3' height='218.6' fill='#082a08'/><rect x='2016.08' y='444.8' width='3.7' height='153.7' fill='#84c27a'/><rect x='2019.78' y='444.8' width='1.3' height='153.7' fill='#082a08'/><rect x='2021.38' y='473.8' width='3.7' height='124.7' fill='#84c27a'/><rect x='2025.08' y='473.8' width='1.3' height='124.7' fill='#082a08'/><rect x='2032.01' y='451.5' width='3.7' height='147.0' fill='#84c27a'/><rect x='2035.71' y='451.5' width='1.3' height='147.0' fill='#082a08'/><rect x='2037.31' y='453.8' width='3.7' height='144.7' fill='#84c27a'/><rect x='2041.01' y='453.8' width='1.3' height='144.7' fill='#082a08'/><rect x='2047.94' y='393.0' width='3.7' height='205.5' fill='#84c27a'/><rect x='2051.64' y='393.0' width='1.3' height='205.5' fill='#082a08'/><rect x='2053.24' y='413.8' width='3.7' height='184.7' fill='#84c27a'/><rect x='2056.94' y='413.8' width='1.3' height='184.7' fill='#082a08'/><rect x='2063.87' y='404.1' width='3.7' height='194.4' fill='#84c27a'/><rect x='2067.57' y='404.1' width='1.3' height='194.4' fill='#082a08'/><rect x='2069.17' y='574.8' width='3.7' height='23.7' fill='#84c27a'/><rect x='2072.87' y='574.8' width='1.3' height='23.7' fill='#082a08'/></svg>
<div class='a' style='left:96px;top:654px;width:2009px;height:900px;background:#1b1c20;border:1px solid rgba(204,204,220,0.12);border-radius:3px'></div>
<div class='a' style='left:1820px;top:667px;width:272px;height:36px;background:#7f26ff;border-radius:4px'></div>
<svg class='a' style='left:1835px;top:673px' width='21' height='25' viewBox='0 0 21 25'><path d='M8.6 1.6C9.6 5 12 7.2 11.4 11.8C12.8 10.6 14.3 9.4 15.4 7.8C17.8 10.2 19 13 19 16C19 20 16.2 22.6 13.8 22.6C12 22.6 9.8 20.6 7.6 15.4C6.8 17.4 6.6 20.2 6.6 22.4C3.8 21.8 1.8 19.4 1.8 16C1.8 11.4 6 8.6 8.6 1.6Z' fill='none' stroke='#fff' stroke-width='2.1' stroke-linejoin='round'/></svg>
<div class='t' style='left:1869px;top:674px;font-size:21px;font-weight:700;color:#ffffff'>Explain Flame Graph</div>
<div class='a' style='left:109px;top:715px;width:525px;height:48px;background:#0f1118;border:1px solid rgba(204,204,220,0.2);border-radius:3px'></div>
<div class='t' style='left:121px;top:728px;font-size:22px;color:#9fa0aa'>Search...</div>
<div class='a' style='left:1564px;top:715px;width:38px;height:36px;background:transparent;border:1px solid rgba(204,204,220,0.2);border-radius:3px'></div>
<svg class='a' style='left:1575.6px;top:724.6px' width='16' height='16' viewBox='0 0 16 16'><clipPath id='cbc'><circle cx='8' cy='8' r='7.6'/></clipPath><g clip-path='url(#cbc)'><rect x='0' y='0' width='4' height='16' fill='#d6b08a'/><rect x='4' y='0' width='3' height='16' fill='#8fc0e0'/><rect x='7' y='0' width='2.5' height='16' fill='#c4a8e8'/><rect x='9.5' y='0' width='6.5' height='16' fill='#f8d48c'/></g></svg>
<div class='a' style='left:1614px;top:715px;width:104px;height:36px;background:transparent;border:1px solid rgba(204,204,220,0.2);border-radius:3px'></div>
<div class='a' style='left:1618px;top:719px;width:48px;height:27px;background:#2d3037;border-radius:3px'></div>
<svg class='a' style='left:1630px;top:722px' width='24' height='20' viewBox='0 0 24 20'><path d='M2.4 4h19.4M2.4 8h15.4M2.4 12h19.4M2.4 16h15.4' stroke='#e2e2ea' stroke-width='2' stroke-linecap='round'/></svg>
<svg class='a' style='left:1678px;top:722px' width='24' height='20' viewBox='0 0 24 20'><path d='M2.3 4h19.4M6.3 8h15.4M2.3 12h19.4M6.3 16h15.4' stroke='#a9aab2' stroke-width='2' stroke-linecap='round'/></svg>
<div class='a' style='left:1730px;top:715px;width:318px;height:36px;background:transparent;border:1px solid rgba(204,204,220,0.2);border-radius:3px'></div>
<div class='a' style='left:1844px;top:719px;width:135px;height:27px;background:#2d3037;border-radius:3px'></div>
<div class='t' style='left:1747px;top:723px;font-size:19.7px;color:#9fa0aa'>Top Table</div>
<div class='t' style='left:1856px;top:723px;-webkit-text-stroke:0.55px currentColor;font-size:18.9px;font-weight:400;color:#e4e4ec'>Flame Graph</div>
<div class='t' style='left:1992px;top:723px;font-size:18.5px;color:#9fa0aa'>Both</div>
<div class='a' style='left:2060px;top:715px;width:32px;height:36px;background:transparent;border:1px solid rgba(204,204,220,0.2);border-radius:3px'></div>
<svg class='a' style='left:2066px;top:722px' width='20' height='22' viewBox='0 0 20 22'><path d='M9.5 2v13M6.3 11.7l3.2 3.3 3.2-3.3' fill='none' stroke='#d6d6de' stroke-width='1.7'/><path d='M5.3 8.3h-1.3a2 2 0 0 0-2 2v6.6a2 2 0 0 0 2 2h11a2 2 0 0 0 2-2v-6.6a2 2 0 0 0-2-2h-1.3' fill='none' stroke='#d6d6de' stroke-width='1.8'/></svg>
<div class='a' style='left:933px;top:787px;width:334px;height:39px;background:#22252b;border-radius:19px'></div>
<div class='t' style='left:945px;top:797px;-webkit-text-stroke:0.55px currentColor;font-size:19.8px;color:#a5a6b0'>46.5 mins | 2.79 Tri samples (Time)</div>
<div class='fb' style='left:109px;top:838px;width:1983px;height:35px;background:#8a81c7'><span class='ft'>total (46.5 mins)</span></div>
<div class='fb' style='left:109px;top:873px;width:1741px;height:35px;background:#8a81c7'><span class='ft'>net/http.(*conn).serve (40.8 mins)</span></div>
<div class='fb' style='left:1850px;top:873px;width:97px;height:35px;background:#de8b53'><span class='ft'>rideshare/utility.</span></div>
<div class='a' style='left:1949px;top:873px;width:1px;height:35px;background:#3b3e45'></div>
<div class='fb' style='left:1950px;top:873px;width:142px;height:35px;background:#e3a7e0'><span class='ft'>runtime.nanotime (5.81 mins)</span></div>
<div class='fb' style='left:109px;top:908px;width:1741px;height:36px;background:#8a81c7'><span class='ft'>net/http.serverHandler.ServeHTTP (40.8 mins)</span></div>
<div class='fb' style='left:1850px;top:908px;width:97px;height:36px;background:#de8b53'><span class='ft'>rideshare/utility.</span></div>
<div class='a' style='left:1949px;top:908px;width:1px;height:36px;background:#3b3e45'></div>
<div class='fb' style='left:109px;top:944px;width:1741px;height:35px;background:#8a81c7'><span class='ft'>net/http.(*ServeMux).ServeHTTP (40.8 mins)</span></div>
<div class='fb' style='left:1850px;top:944px;width:92px;height:35px;background:#f2c96d'><span class='ft'>time.Since (1.00 mins)</span></div>
<div class='a' style='left:1949px;top:944px;width:1px;height:35px;background:#3b3e45'></div>
<div class='fb' style='left:109px;top:979px;width:1741px;height:35px;background:#83b7d8'><span class='ft'>go.opentelemetry.io/contrib/instrumentation/net/http/otelhttp.(*Handler).ServeHTTP (40.8 mins)</span></div>
<div class='fb' style='left:1850px;top:979px;width:75px;height:35px;background:#e3a7e0'><span class='ft'>runtime.nanotime</span></div>
<div class='a' style='left:1925px;top:979px;width:9px;height:35px;background:#3b3e45'></div>
<div class='a' style='left:1949px;top:979px;width:1px;height:35px;background:#3b3e45'></div>
<div class='fb' style='left:109px;top:1014px;width:1739px;height:35px;background:#8a81c7'><span class='ft'>net/http.HandlerFunc.ServeHTTP (40.8 mins)</span></div>
<div class='fb' style='left:109px;top:1049px;width:105px;height:35px;background:#5195cc'><span class='ft'>main.bikeRoute</span></div>
<div class='fb' style='left:214px;top:1049px;width:1425px;height:35px;background:#5195cc'><span class='ft'>main.carRoute (33.5 mins)</span></div>
<div class='fb' style='left:1639px;top:1049px;width:209px;height:35px;background:#5195cc'><span class='ft'>main.scooterRoute</span></div>
<div class='fb' style='left:109px;top:1084px;width:105px;height:36px;background:#e7635f'><span class='ft'>rideshare/bike.OrderBike</span></div>
<div class='fb' style='left:214px;top:1084px;width:1425px;height:36px;background:#f3d69c'><span class='ft'>rideshare/car.OrderCar (33.5 mins)</span></div>
<div class='fb' style='left:1639px;top:1084px;width:209px;height:36px;background:#e3a7e0'><span class='ft'>rideshare/scooter.OrderScooter</span></div>
<div class='fb' style='left:109px;top:1120px;width:105px;height:35px;background:#de8b53'><span class='ft'>rideshare/utility.FindNearestVehicle</span></div>
<div class='fb' style='left:214px;top:1120px;width:1425px;height:35px;background:#de8b53'><span class='ft'>rideshare/utility.FindNearestVehicle (33.5 mins)</span></div>
<div class='fb' style='left:1639px;top:1120px;width:209px;height:35px;background:#de8b53'><span class='ft'>rideshare/utility.FindNearestVehicle</span></div>
<div class='fb' style='left:109px;top:1155px;width:105px;height:35px;background:#5195cc'><span class='ft'>github.com/grafana</span></div>
<div class='fb' style='left:214px;top:1155px;width:1425px;height:35px;background:#5195cc'><span class='ft'>github.com/grafana/pyroscope-go.TagWrapper (33.5 mins)</span></div>
<div class='fb' style='left:1639px;top:1155px;width:209px;height:35px;background:#5195cc'><span class='ft'>github.com/grafana/pyroscope-go</span></div>
<div class='fb' style='left:109px;top:1190px;width:105px;height:35px;background:#4f8ef1'><span class='ft'>runtime/pprof.Do</span></div>
<div class='fb' style='left:214px;top:1190px;width:1425px;height:35px;background:#4f8ef1'><span class='ft'>runtime/pprof.Do (33.5 mins)</span></div>
<div class='fb' style='left:1639px;top:1190px;width:209px;height:35px;background:#4f8ef1'><span class='ft'>runtime/pprof.Do (4.80 mins)</span></div>
<div class='fb' style='left:109px;top:1225px;width:105px;height:35px;background:#de8b53'><span class='ft'>rideshare/utility.</span></div>
<div class='fb' style='left:214px;top:1225px;width:1425px;height:35px;background:#de8b53'><span class='ft'>rideshare/utility.FindNearestVehicle.TagWrapper.func2 (33.5 mins)</span></div>
<div class='fb' style='left:1639px;top:1225px;width:209px;height:35px;background:#de8b53'><span class='ft'>rideshare/utility.FindNearest</span></div>
<div class='fb' style='left:109px;top:1260px;width:105px;height:36px;background:#de8b53'><span class='ft'>rideshare/utility.</span></div>
<div class='fb' style='left:214px;top:1260px;width:1425px;height:36px;background:#de8b53'><span class='ft'>rideshare/utility.FindNearestVehicle.func1 (33.5 mins)</span></div>
<div class='fb' style='left:1639px;top:1260px;width:209px;height:36px;background:#de8b53'><span class='ft'>rideshare/utility.FindNearest</span></div>
<div class='fb' style='left:109px;top:1296px;width:102px;height:35px;background:#f2c96d'><span class='ft'>time.Since</span></div>
<div class='fb' style='left:214px;top:1296px;width:1113px;height:35px;background:#de8b53'><span class='ft'>rideshare/utility.checkDriverAvailability (26.1 mins)</span></div>
<div class='fb' style='left:1327px;top:1296px;width:304px;height:35px;background:#f2c96d'><span class='ft'>time.Since (7.17 mins)</span></div>
<div class='fb' style='left:1639px;top:1296px;width:204px;height:35px;background:#f2c96d'><span class='ft'>time.Since (4.80 mins)</span></div>
<div class='fb' style='left:109px;top:1331px;width:83px;height:35px;background:#e3a7e0'><span class='ft'>runtime.nanotime</span></div>
<div class='a' style='left:192px;top:1331px;width:10px;height:35px;background:#3b3e45'></div>
<div class='fb' style='left:214px;top:1331px;width:215px;height:35px;background:#de8b53'><span class='ft'>rideshare/utility.(*Mutex)</span></div>
<div class='fb' style='left:429px;top:1331px;width:898px;height:35px;background:#de8b53'><span class='ft'>rideshare/utility.mutexLock (21.1 mins)</span></div>
<div class='fb' style='left:1327px;top:1331px;width:248px;height:35px;background:#e3a7e0'><span class='ft'>runtime.nanotime (5.81 mins)</span></div>
<div class='fb' style='left:1575px;top:1331px;width:29px;height:35px;background:#f2c96d'><span class='ft'></span></div>
<div class='fb' style='left:1639px;top:1331px;width:167px;height:35px;background:#e3a7e0'><span class='ft'>runtime.nanotime</span></div>
<div class='fb' style='left:1806px;top:1331px;width:19px;height:35px;background:#f2c96d'><span class='ft'></span></div>
<div class='fb' style='left:214px;top:1366px;width:215px;height:35px;background:#de8b53'><span class='ft'>rideshare/utility.checkDriver</span></div>
<div class='fb' style='left:429px;top:1366px;width:867px;height:35px;background:#f2c96d'><span class='ft'>time.Since (20.4 mins)</span></div>
<div class='fb' style='left:214px;top:1401px;width:205px;height:35px;background:#f2c96d'><span class='ft'>time.Since (4.84 mins)</span></div>
<div class='fb' style='left:429px;top:1401px;width:709px;height:35px;background:#e3a7e0'><span class='ft'>runtime.nanotime (16.6 mins)</span></div>
<div class='fb' style='left:1138px;top:1401px;width:85px;height:35px;background:#f2c96d'><span class='ft'>time.Time.Sub</span></div>
<div class='fb' style='left:214px;top:1436px;width:170px;height:36px;background:#e3a7e0'><span class='ft'>runtime.nanotime (4.00 mins)</span></div>
<div class='fb' style='left:384px;top:1436px;width:18px;height:36px;background:#f2c96d'><span class='ft'></span></div>
<div class='a' style='left:0;top:1479px;width:2188px;height:1px;background:#0d0e11'></div>
<svg class='a' style='left:2180px;top:1076px' width='8' height='36' viewBox='0 0 8 36'><path d='M2.8 1.5 L10 8.5 L10 29 L2.8 34.5 Z' fill='#fff'/><path d='M4.6 6 L10 11 L10 27 L4.6 31 Z' fill='#000'/></svg>
<div class='a' style='left:0;top:2px;width:1px;height:1478px;background:#2c2f34'></div>
</body></html>
